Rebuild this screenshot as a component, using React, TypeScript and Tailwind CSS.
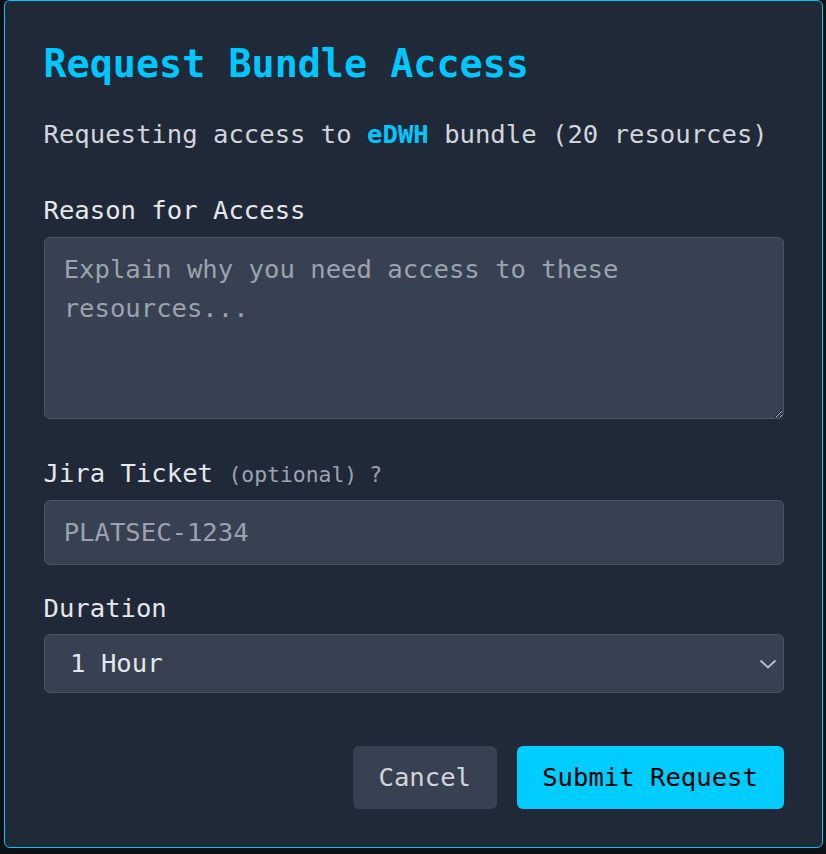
import { useState } from "react";

const mono = "font-['DejaVu_Sans_Mono',Menlo,monospace]";

export default function App() {
  const [reason, setReason] = useState("");
  const [ticket, setTicket] = useState("");
  const [duration, setDuration] = useState("1h");

  return (
    <div className={`min-h-[854px] w-[826px] bg-[#0d1015] pl-[4px] pr-[3px] ${mono}`}>
      <div className="rounded-[6px] border-[1.5px] border-[#00c8ff] bg-[#1f2937] px-[38.5px] pt-[38px] pb-[38px]">
        <h2 className="text-[38.4px] leading-[50.7px] font-bold text-[#00c8ff]">Request Bundle Access</h2>

        <p className="mt-[25px] text-[25.6px] leading-[38.4px] text-[#d1d5db]">
          Requesting access to <span className="font-bold text-[#00c8ff]">eDWH</span> bundle (20 resources)
        </p>

        {/* Reason */}
        <label className="mt-[38px] block text-[25.6px] leading-[38.4px] text-[#e5e7eb]">Reason for Access</label>
        <textarea
          value={reason}
          onChange={(e) => setReason(e.target.value)}
          placeholder="Explain why you need access to these resources..."
          className="mt-[7px] block h-[182px] w-full rounded-[6px] border-[1.6px] border-[#4b5563] bg-[#374151] px-[19.2px] py-[12.8px] text-[25.6px] leading-[38.4px] text-[#e5e7eb] placeholder:text-[#9ca3af] outline-none"
        />

        {/* Jira ticket */}
        <label className="mt-[35px] block text-[25.6px] leading-[38.4px] text-[#e5e7eb]">
          Jira Ticket <span className="text-[21.4px] leading-[30px] text-[#9ca3af]">(optional)</span>
          <span className="ml-[12px] text-[21.4px] leading-[30px] text-[#9ca3af]">?</span>
        </label>
        <input
          value={ticket}
          onChange={(e) => setTicket(e.target.value)}
          placeholder="PLATSEC-1234"
          className="mt-[8px] block h-[65px] w-full rounded-[6px] border-[1.6px] border-[#4b5563] bg-[#374151] px-[19.2px] text-[25.6px] text-[#e5e7eb] placeholder:text-[#9ca3af] outline-none"
        />

        {/* Duration */}
        <label className="mt-[24px] block text-[25.6px] leading-[38.4px] text-[#e5e7eb]">Duration</label>
        <div className="relative mt-[6.5px]">
          <select
            value={duration}
            onChange={(e) => setDuration(e.target.value)}
            className="block h-[59px] w-full appearance-none rounded-[6px] border-[1.6px] border-[#4b5563] bg-[#374151] px-[25.6px] text-[25.6px] text-[#e5e7eb] outline-none"
          >
            <option value="1h">1 Hour</option>
            <option value="4h">4 Hours</option>
            <option value="8h">8 Hours</option>
            <option value="24h">24 Hours</option>
          </select>
          <svg
            className="pointer-events-none absolute right-[7px] top-[25px]"
            width="18"
            height="10"
            viewBox="0 0 18 10"
            fill="none"
            stroke="#b4bcc8"
            strokeWidth="2"
          >
            <path d="M1.5 1.5 9 8.5 16.5 1.5" />
          </svg>
        </div>

        <div className="mt-[53px] flex justify-end gap-[20px]">
          <button className="h-[63.5px] rounded-[6px] bg-[#374151] px-[25.6px] text-[25.6px] text-[#d1d5db]">Cancel</button>
          <button className="h-[63.5px] rounded-[6px] bg-[#00ccff] px-[25.6px] text-[25.6px] text-black">Submit Request</button>
        </div>
      </div>
    </div>
  );
}
